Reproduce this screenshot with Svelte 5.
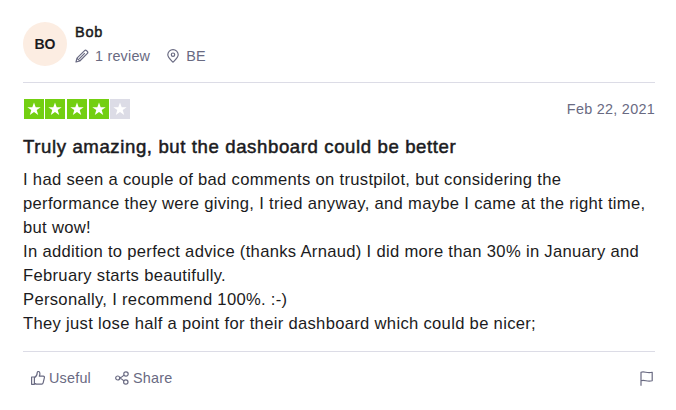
<script lang="ts">
    type Review = {
        name: string;
        initials: string;
        country: string;
        count: string;
        rating: number;
        date: string;
        title: string;
        lines: string[];
    };

    const review: Review = {
        name: 'Bob',
        initials: 'BO',
        country: 'BE',
        count: '1 review',
        rating: 4,
        date: 'Feb 22, 2021',
        title: 'Truly amazing, but the dashboard could be better',
        lines: [
            'I had seen a couple of bad comments on trustpilot, but considering the performance they were giving, I tried anyway, and maybe I came at the right time, but wow!',
            'In addition to perfect advice (thanks Arnaud) I did more than 30% in January and February starts beautifully.',
            'Personally, I recommend 100%. :-)',
            'They just lose half a point for their dashboard which could be nicer;'
        ]
    };
</script>

<article>
    <header>
        <div class="avatar">{review.initials}</div>
        <div class="consumer">
            <div class="name">{review.name}</div>
            <div class="details">
                <svg width="14" height="14" viewBox="0 0 14 14">
                    <path d="M1 13l1-3.800L9.600 1.600c.6-.6 1.300-.6 1.900 0l.9.9c.6.6.6 1.300 0 1.900L4.800 12zM2 9.200L4.800 12M4.200 9.800l5.600-5.600" />
                </svg>
                <span class="count">{review.count}</span>
                <svg width="12" height="14" viewBox="0 0 12 14">
                    <path d="M6 13.2C4.2 11.3.8 8.6.8 5.8a5.2 5.2 0 0 1 10.4 0c0 2.8-3.4 5.500-5.200 7.400z" />
                    <circle cx="6" cy="5.7" r="1.7" />
                </svg>
                <span class="country">{review.country}</span>
            </div>
        </div>
    </header>

    <section>
        <div class="rating">
            <div class="stars">
                {#each [1, 2, 3, 4, 5] as star}
                    <svg class="star" class:empty={star > review.rating} width="20" height="20" viewBox="0 0 20 20">
                        <path d="M10 3.500l1.700 4.700h5l-4 2.900 1.500 4.900-4.200-3-4.200 3 1.500-4.900-4-2.900h5z" />
                    </svg>
                {/each}
            </div>
            <time>{review.date}</time>
        </div>
        <h2>{review.title}</h2>
        <div class="text">
            {#each review.lines as line}
                <p>{line}</p>
            {/each}
        </div>
    </section>

    <footer>
        <button>
            <svg width="14" height="14" viewBox="0 0 14 14">
                <path d="M.6 6h2.800v7.300H.6zM3.400 6.600c2-1 2.800-2.600 2.800-4.800C6.200.8 6.900.5 7.400.5c1.300 0 1.500 1.300 1.500 2.300 0 1-.3 1.700-.6 2.400h3.900c1 0 1.400.7 1.200 1.500l-1.200 5c-.2.9-.7 1.400-1.500 1.400H5.600c-1 0-1.500-.6-2.200-.8" />
            </svg>
            <span>Useful</span>
        </button>
        <button class="share">
            <svg width="14" height="14" viewBox="0 0 14 14">
                <circle cx="2.7" cy="7" r="2" />
                <circle cx="11" cy="3" r="2.2" />
                <circle cx="10.8" cy="11" r="2.2" />
                <path d="M4.700 6.600c2 0 2.800-1.200 4.400-2.500M4.700 7.400c2 0 2.500 1.200 4 2.500" />
            </svg>
            <span>Share</span>
        </button>
        <button class="flag" aria-label="Report review">
            <svg width="13" height="15" viewBox="0 0 13 15">
                <path d="M1 14.800V1.300c3.500-1.500 6 1.600 11.200 0v8.400C7 11.400 5 8.200 1 9.700" />
            </svg>
        </button>
    </footer>
</article>

<style>
    :global(body) {
        background: #fff;
    }

    article {
        box-sizing: border-box;
        width: 676px;
        height: 410px;
        padding: 22px 21px 0 23px;
        font-family: "Liberation Sans", Arial, sans-serif;
        color: #1b1b21;
    }

    header {
        display: flex;
        height: 60px;
        border-bottom: 1px solid #dcdce6;
    }

    .avatar {
        width: 44px;
        height: 44px;
        border-radius: 50%;
        background: #fcede2;
        font-size: 14px;
        font-weight: bold;
        line-height: 44px;
        text-align: center;
    }

    .consumer {
        margin-left: 8px;
    }

    .name {
        font-size: 14.5px;
        line-height: 20px;
        letter-spacing: 0.8px;
        -webkit-text-stroke: 0.5px #1b1b21;
    }

    .details {
        display: flex;
        align-items: center;
        height: 20px;
        margin-top: 4px;
        font-size: 14.4px;
        letter-spacing: 0.2px;
        color: #696a82;
    }

    .details span {
        margin-left: 6px;
    }

    .count {
        margin-right: 17px;
    }

    .details .country {
        margin-left: 7px;
    }

    svg {
        display: block;
        flex: none;
        fill: none;
        stroke: #696a82;
        stroke-width: 1.2;
        stroke-linejoin: round;
    }

    .rating {
        display: flex;
        align-items: center;
        justify-content: space-between;
        height: 20px;
        margin-top: 16px;
    }

    .stars {
        display: flex;
        gap: 1.7px;
        margin-left: 0.5px;
    }

    .star {
        background: #73cf11;
        fill: #fff;
        stroke: none;
    }

    .star.empty {
        background: #dcdce6;
    }

    time {
        font-size: 14.4px;
        letter-spacing: 0.28px;
        color: #696a82;
    }

    h2 {
        margin: 16px 0 0;
        font-size: 18.6px;
        font-weight: normal;
        line-height: 24px;
        letter-spacing: 0.6px;
        -webkit-text-stroke: 0.5px #1b1b21;
    }

    .text {
        margin-top: 9px;
        font-size: 16.6px;
        line-height: 24px;
        letter-spacing: 0.31px;
    }

    p {
        margin: 0;
    }

    footer {
        display: flex;
        align-items: center;
        height: 52px;
        margin-top: 15px;
        border-top: 1px solid #dcdce6;
    }

    button {
        display: flex;
        align-items: center;
        gap: 4px;
        margin: 0;
        padding: 0 0 0 8px;
        border: none;
        background: none;
        font: 14.4px "Liberation Sans", Arial, sans-serif;
        letter-spacing: 0.2px;
        color: #696a82;
    }

    .share {
        margin-left: 16px;
    }

    .flag {
        margin-left: auto;
        padding-right: 2px;
    }
</style>
